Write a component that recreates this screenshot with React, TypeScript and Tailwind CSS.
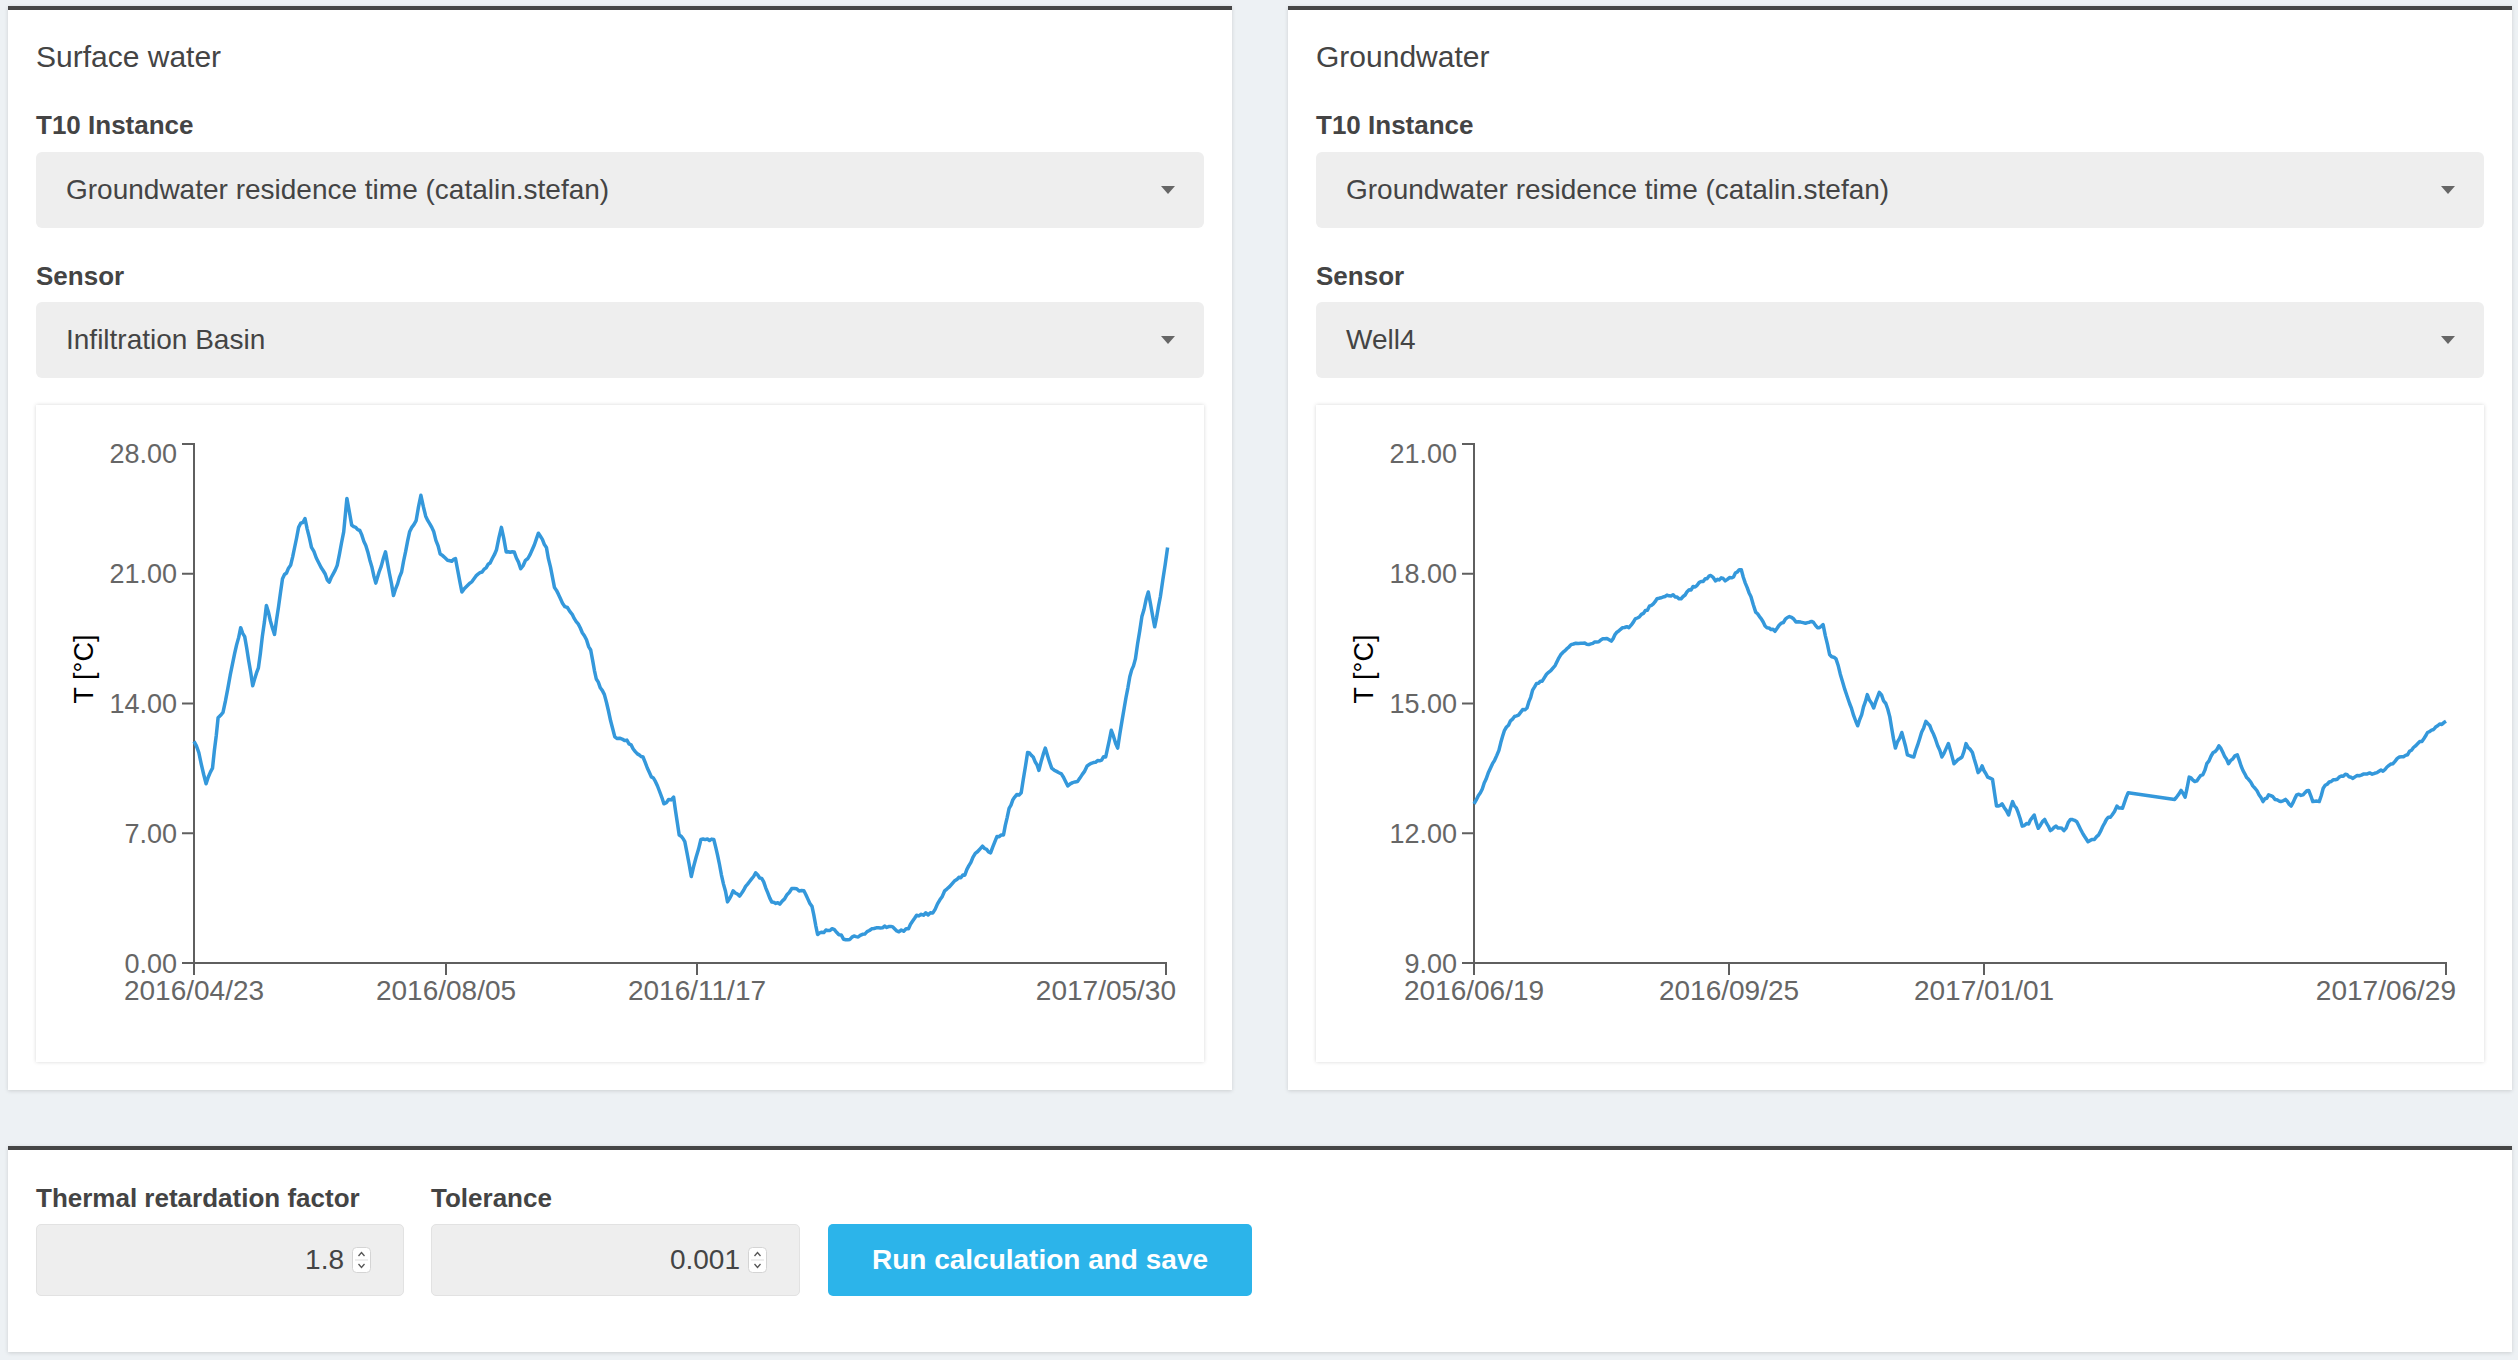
import React from "react";

type Pt = [number, number];

const leftPts: Pt[] = [
  [242, 765], [248, 790], [257, 860], [265, 825], [272, 712], [278, 700], [290, 590], [300, 510],
  [305, 530], [315, 640], [322, 600], [332, 460], [342, 525], [352, 400], [362, 370], [372, 285],
  [380, 265], [388, 330], [400, 375], [410, 408], [420, 370], [428, 295], [432, 220], [438, 280],
  [448, 292], [458, 340], [468, 410], [472, 385], [480, 340], [490, 438], [500, 385], [510, 295],
  [518, 270], [524, 213], [530, 260], [540, 295], [548, 345], [560, 360], [567, 355], [575, 430],
  [585, 410], [595, 390], [600, 385], [610, 365], [618, 335], [624, 285], [630, 340], [640, 340],
  [648, 378], [660, 345], [670, 298], [680, 330], [690, 420], [700, 455], [712, 480], [722, 510],
  [735, 560], [742, 625], [752, 660], [765, 755], [780, 762], [793, 793], [800, 800], [808, 835],
  [818, 865], [826, 905], [838, 890], [845, 975], [852, 990], [860, 1068], [872, 985], [888, 985],
  [895, 1040], [905, 1125], [912, 1100], [920, 1112], [930, 1085], [940, 1060], [950, 1080],
  [960, 1125], [970, 1130], [985, 1095], [1000, 1100], [1010, 1135], [1017, 1198], [1035, 1185],
  [1052, 1210], [1070, 1200], [1090, 1183], [1108, 1180], [1118, 1192], [1130, 1185], [1140, 1155],
  [1160, 1150], [1175, 1100], [1190, 1075], [1200, 1065], [1210, 1025], [1222, 1000], [1232, 1015],
  [1240, 978], [1248, 975], [1255, 915], [1262, 890], [1270, 880], [1278, 790], [1285, 800],
  [1292, 830], [1300, 780], [1308, 825], [1320, 838], [1328, 865], [1340, 855], [1352, 820],
  [1365, 808], [1375, 800], [1382, 740], [1390, 780], [1398, 690], [1405, 620], [1412, 580],
  [1420, 485], [1428, 430], [1436, 508], [1443, 440], [1452, 330],
];

const rightPts: Pt[] = [
  [267, 905], [275, 880], [282, 850], [290, 815], [298, 785], [305, 740], [315, 715], [325, 700],
  [333, 690], [340, 650], [345, 635], [352, 630], [360, 610], [368, 595], [372, 580], [378, 565],
  [388, 548], [400, 545], [410, 548], [420, 542], [430, 535], [438, 540], [445, 520], [452, 510],
  [460, 510], [468, 490], [478, 478], [488, 460], [495, 445], [505, 440], [515, 436], [525, 445],
  [535, 425], [545, 415], [555, 400], [562, 393], [568, 405], [575, 398], [580, 405], [588, 398],
  [595, 385], [600, 380], [605, 410], [612, 440], [618, 475], [625, 490], [632, 510], [642, 518],
  [650, 500], [660, 485], [668, 497], [680, 500], [690, 498], [695, 510], [702, 503], [710, 570],
  [718, 580], [726, 630], [735, 680], [745, 730], [750, 705], [757, 660], [765, 690], [772, 655],
  [780, 680], [785, 710], [792, 780], [800, 745], [807, 795], [815, 800], [822, 760], [830, 720],
  [835, 730], [842, 760], [850, 800], [858, 770], [865, 815], [875, 800], [880, 770], [888, 790],
  [895, 835], [900, 820], [907, 845], [913, 850], [918, 910], [925, 905], [933, 930], [938, 900],
  [945, 925], [950, 955], [958, 950], [965, 930], [970, 960], [978, 940], [985, 965], [992, 955],
  [1002, 965], [1010, 940], [1018, 945], [1025, 970], [1032, 990], [1040, 985], [1048, 965],
  [1055, 940], [1062, 930], [1068, 910], [1075, 915], [1082, 880], [1140, 895], [1148, 875],
  [1153, 890], [1158, 845], [1165, 855], [1175, 840], [1180, 815], [1188, 790], [1195, 775],
  [1200, 790], [1207, 815], [1212, 805], [1218, 795], [1225, 830], [1232, 850], [1240, 870],
  [1250, 900], [1257, 885], [1265, 895], [1272, 900], [1278, 895], [1285, 910], [1292, 885],
  [1300, 885], [1307, 875], [1312, 900], [1320, 900], [1325, 870], [1335, 855], [1345, 845],
  [1355, 840], [1362, 848], [1370, 842], [1380, 838], [1392, 835], [1402, 828], [1412, 815],
  [1420, 800], [1430, 795], [1440, 775], [1448, 765], [1455, 745], [1465, 733], [1478, 720],
];

const X0 = 158;
const X1 = 1130;
const Y0 = 39;
const Y1 = 558;

function buildPath(pts: Pt[], zx0: number, zx1: number, zy0: number, zy1: number, seed: number) {
  const mapped = pts.map(([zx, zy]) => [
    X0 + ((zx - zx0) / (zx1 - zx0)) * (X1 - X0),
    Y0 + ((zy - zy0) / (zy1 - zy0)) * (Y1 - Y0),
  ]);
  let s = seed;
  const rnd = () => {
    s = (s * 16807) % 2147483647;
    return s / 2147483647;
  };
  const out: number[][] = [];
  for (let i = 0; i < mapped.length - 1; i++) {
    const [ax, ay] = mapped[i];
    const [bx, by] = mapped[i + 1];
    const long = bx - ax > 40;
    const n = long ? 1 : Math.max(1, Math.round((bx - ax) / 2.2));
    for (let k = 0; k < n; k++) {
      const t = k / n;
      let y = ay + (by - ay) * t;
      if (k > 0) y += (rnd() - 0.5) * 2.6;
      out.push([ax + (bx - ax) * t, y]);
    }
  }
  out.push(mapped[mapped.length - 1]);
  return "M" + out.map((p) => p[0].toFixed(1) + "," + p[1].toFixed(1)).join("L");
}

const yPos = [39, 168.75, 298.5, 428.25, 558];

function Chart({
  yLabels,
  xTicks,
  path,
}: {
  yLabels: string[];
  xTicks: { x: number; label: string }[];
  path: string;
}) {
  return (
    <div className="mt-[27px] h-[657px] bg-white shadow-[0_0_4px_rgba(0,0,0,0.16)]">
      <svg width="1167" height="657" className="block" fontFamily="'Liberation Sans', Arial, sans-serif">
        <text transform="translate(57,264) rotate(-90)" textAnchor="middle" fontSize="27" fill="#000">
          T [°C]
        </text>
        <path d={`M146,${Y0} H${X0} V${Y1} H146`} fill="none" stroke="#5f5f5f" strokeWidth="2" />
        {yPos.slice(1, 4).map((y) => (
          <line key={y} x1="146" x2={X0} y1={y} y2={y} stroke="#5f5f5f" strokeWidth="2" />
        ))}
        {yLabels.map((l, i) => (
          <text
            key={l}
            x="141"
            y={yPos[i] + (i === 0 ? 9 : 0)}
            dy="0.36em"
            textAnchor="end"
            fontSize="27"
            fill="#666"
          >
            {l}
          </text>
        ))}
        <path d={`M${X0},570 V${Y1} H${X1} V570`} fill="none" stroke="#5f5f5f" strokeWidth="2" />
        {xTicks.slice(1, xTicks.length - 1).map((t) => (
          <line key={t.x} x1={t.x} x2={t.x} y1={Y1} y2="570" stroke="#5f5f5f" strokeWidth="2" />
        ))}
        {xTicks.map((t, i) => (
          <text
            key={t.label}
            x={i === xTicks.length - 1 ? t.x + 10 : t.x}
            y="595"
            textAnchor={i === xTicks.length - 1 ? "end" : "middle"}
            fontSize="28"
            fill="#666"
          >
            {t.label}
          </text>
        ))}
        <path d={path} fill="none" stroke="#3498db" strokeWidth="3.5" strokeLinejoin="round" />
      </svg>
    </div>
  );
}

function Select({ value }: { value: string }) {
  return (
    <div className="flex h-[76px] items-center justify-between rounded-[6px] bg-[#eeeeee] pl-[30px] pr-[29px]">
      <span className="text-[28px] leading-none text-[#444]">{value}</span>
      <svg width="14" height="8" className="block">
        <polygon points="0,0 14,0 7,8" fill="#666" />
      </svg>
    </div>
  );
}

function Panel({
  title,
  sensor,
  chart,
}: {
  title: string;
  sensor: string;
  chart: React.ReactNode;
}) {
  return (
    <div className="flex-1 border-t-4 border-[#464646] bg-white px-[28px] pt-[27px] pb-[28px] shadow-[0_1px_4px_rgba(0,0,0,0.14)]">
      <div className="h-[40px] text-[30px] leading-[40px] text-[#444]">{title}</div>
      <div className="mt-[33px] h-[30px] text-[26px] font-bold leading-[30px] text-[#444]">T10 Instance</div>
      <div className="mt-[12px]">
        <Select value="Groundwater residence time (catalin.stefan)" />
      </div>
      <div className="mt-[33px] h-[30px] text-[26px] font-bold leading-[30px] text-[#444]">Sensor</div>
      <div className="mt-[11px]">
        <Select value={sensor} />
      </div>
      {chart}
    </div>
  );
}

function Spinner() {
  return (
    <svg width="19" height="26" className="ml-[8px] block">
      <rect x="0.5" y="0.5" width="18" height="25" rx="4" fill="#fff" stroke="#d4d4d4" />
      <line x1="3" x2="16" y1="13" y2="13" stroke="#ddd" />
      <polyline points="6.5,9 9.5,5.5 12.5,9" fill="none" stroke="#555" strokeWidth="1.3" />
      <polyline points="6.5,17 9.5,20.5 12.5,17" fill="none" stroke="#555" strokeWidth="1.3" />
    </svg>
  );
}

function NumField({ label, value, width }: { label: string; value: string; width: string }) {
  return (
    <div className="flex flex-col">
      <div className="h-[30px] text-[26px] font-bold leading-[30px] text-[#444]">{label}</div>
      <div
        className={`mt-[11px] flex h-[72px] items-center justify-end rounded-[5px] border border-[#e2e2e2] bg-[#eeeeee] pr-[32px] ${width}`}
      >
        <span className="text-[28px] leading-none text-[#444]">{value}</span>
        <Spinner />
      </div>
    </div>
  );
}

export default function App() {
  const leftPath = buildPath(leftPts, 242, 1450, 98, 1262, 12345);
  const rightPath = buildPath(rightPts, 267, 1478, 98, 1262, 67891);
  return (
    <div className="min-h-screen bg-[#edf1f4] pt-[6px] pl-[8px] pr-[6px] pb-[8px] font-['Liberation_Sans',Arial,sans-serif]">
      <div className="flex gap-[56px]">
        <Panel
          title="Surface water"
          sensor="Infiltration Basin"
          chart={
            <Chart
              yLabels={["28.00", "21.00", "14.00", "7.00", "0.00"]}
              xTicks={[
                { x: 158, label: "2016/04/23" },
                { x: 410, label: "2016/08/05" },
                { x: 661, label: "2016/11/17" },
                { x: 1130, label: "2017/05/30" },
              ]}
              path={leftPath}
            />
          }
        />
        <Panel
          title="Groundwater"
          sensor="Well4"
          chart={
            <Chart
              yLabels={["21.00", "18.00", "15.00", "12.00", "9.00"]}
              xTicks={[
                { x: 158, label: "2016/06/19" },
                { x: 413, label: "2016/09/25" },
                { x: 668, label: "2017/01/01" },
                { x: 1130, label: "2017/06/29" },
              ]}
              path={rightPath}
            />
          }
        />
      </div>
      <div className="mt-[56px] border-t-4 border-[#464646] bg-white px-[28px] pt-[33px] pb-[56px] shadow-[0_1px_4px_rgba(0,0,0,0.14)]">
        <div className="flex items-end">
          <NumField label="Thermal retardation factor" value="1.8" width="w-[368px]" />
          <div className="ml-[27px]">
            <NumField label="Tolerance" value="0.001" width="w-[369px]" />
          </div>
          <button className="ml-[28px] h-[72px] w-[424px] rounded-[5px] bg-[#2cb4ea] text-[28px] font-bold text-white">
            Run calculation and save
          </button>
        </div>
      </div>
    </div>
  );
}
